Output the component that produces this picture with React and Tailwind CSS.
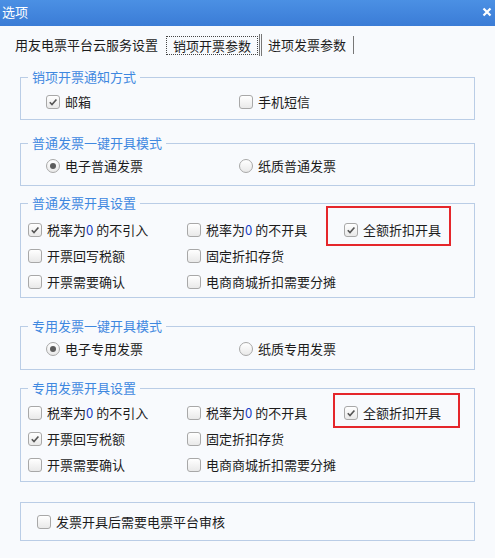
const font = { fontFamily: '"Noto Sans CJK SC", "Noto Sans", sans-serif' };

function Check({ checked }) {
  return (
    <span className="flex h-[14px] w-[14px] shrink-0 items-center justify-center rounded-[3px] border border-[#a8a8a8] bg-gradient-to-b from-white to-[#e9e9e9]">
      {checked && (
        <svg width="10" height="10" viewBox="0 0 10 10">
          <path d="M1.8 5.2 L4 7.6 L8.4 2.4" fill="none" stroke="#555" strokeWidth="1.6" />
        </svg>
      )}
    </span>
  );
}

function Radio({ checked }) {
  return (
    <span className="flex h-[14px] w-[14px] shrink-0 items-center justify-center rounded-full border border-[#a8a8a8] bg-gradient-to-b from-white to-[#e9e9e9]">
      {checked && <span className="h-[6px] w-[6px] rounded-full bg-[#5c5c5c]" />}
    </span>
  );
}

function Item({ type = "check", checked, children, className = "" }) {
  return (
    <div className={"flex h-[18px] items-center gap-[5px] " + className}>
      {type === "radio" ? <Radio checked={checked} /> : <Check checked={checked} />}
      <span className="leading-[18px] whitespace-nowrap">{children}</span>
    </div>
  );
}

function Zero() {
  return <span className="text-[#1b3fc4]">0</span>;
}

function Group({ title, className = "", children }) {
  return (
    <fieldset className={"border border-[#bacde6] pl-[7px] " + className}>
      {title && <legend className="px-[4px] leading-[18px] text-[#3f88e0]">{title}</legend>}
      {children}
    </fieldset>
  );
}

function Marked({ children, box }) {
  return (
    <div className="relative">
      {children}
      <span className={"absolute border-2 border-[#e5262b] " + box} />
    </div>
  );
}

export default function App() {
  return (
    <div className="h-[558px] w-[495px] overflow-hidden bg-[#f8fafd] text-[13px] text-[#1c1c1c]" style={font}>
      <div className="flex h-[26px] items-center justify-between bg-gradient-to-b from-[#4b90e4] to-[#3b7cd6] pl-[2px] pr-[3px] pb-[2px] text-white">
        <span className="leading-[18px]">选项</span>
        <svg width="10" height="10" viewBox="0 0 10 10">
          <path d="M1.5 1.5 L8.5 8.5 M8.5 1.5 L1.5 8.5" stroke="#fff" strokeWidth="2.2" />
        </svg>
      </div>

      <div className="mt-[8px] flex h-[22px] items-center pl-[15px]">
        <span className="leading-[18px]">用友电票平台云服务设置</span>
        <div className="ml-[8px] flex h-[22px] items-center border-r-[3px] border-double border-[#777] pr-[1px]">
          <span className="border border-dotted border-[#444] px-[6px] leading-[17px]">销项开票参数</span>
        </div>
        <span className="ml-[6px] border-r border-[#777] pr-[7px] leading-[18px]">进项发票参数</span>
      </div>

      <div className="ml-[20px] mt-[12px] w-[455px]">
        <Group title="销项开票通知方式" className="h-[52px]">
          <div className="mt-[7px] flex pl-[18px]">
            <Item checked className="w-[193px]">邮箱</Item>
            <Item>手机短信</Item>
          </div>
        </Group>

        <Group title="普通发票一键开具模式" className="mt-[14px] h-[52px]">
          <div className="mt-[5px] flex pl-[18px]">
            <Item type="radio" checked className="w-[193px]">电子普通发票</Item>
            <Item type="radio">纸质普通发票</Item>
          </div>
        </Group>

        <Group title="普通发票开具设置" className="mt-[8px] h-[104px]">
          <div className="mt-[9px] grid grid-cols-[159px_157px_1fr] gap-y-[8px]">
            <Item checked>税率为<Zero /> 的不引入</Item>
            <Item>税率为<Zero /> 的不开具</Item>
            <Marked box="left-[-18px] top-[-15px] h-[40px] w-[125px]">
              <Item checked>全额折扣开具</Item>
            </Marked>
            <Item>开票回写税额</Item>
            <Item>固定折扣存货</Item>
            <div />
            <Item>开票需要确认</Item>
            <Item>电商商城折扣需要分摊</Item>
          </div>
        </Group>

        <Group title="专用发票一键开具模式" className="mt-[19px] h-[53px]">
          <div className="mt-[5px] flex pl-[18px]">
            <Item type="radio" checked className="w-[193px]">电子专用发票</Item>
            <Item type="radio">纸质专用发票</Item>
          </div>
        </Group>

        <Group title="专用发票开具设置" className="mt-[9px] h-[103px]">
          <div className="mt-[7px] grid grid-cols-[159px_157px_1fr] gap-y-[8px]">
            <Item>税率为<Zero /> 的不引入</Item>
            <Item>税率为<Zero /> 的不开具</Item>
            <Marked box="left-[-11px] top-[-11px] h-[35px] w-[127px]">
              <Item checked>全额折扣开具</Item>
            </Marked>
            <Item checked>开票回写税额</Item>
            <Item>固定折扣存货</Item>
            <div />
            <Item>开票需要确认</Item>
            <Item>电商商城折扣需要分摊</Item>
          </div>
        </Group>

        <Group className="mt-[20px] flex h-[39px] items-center">
          <Item className="ml-[9px]">发票开具后需要电票平台审核</Item>
        </Group>
      </div>
    </div>
  );
}
